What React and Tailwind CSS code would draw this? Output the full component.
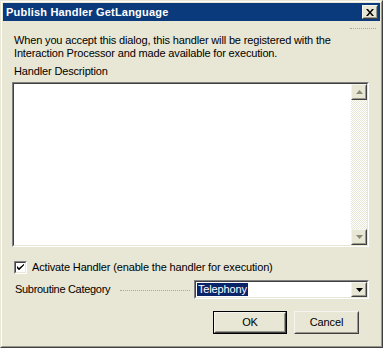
import React from 'react';

const font = { fontFamily: '"Liberation Sans", Arial, sans-serif' };

function Raised({ className = '', children }) {
  return (
    <div className={`border border-t-[#f5f4ee] border-l-[#f5f4ee] border-r-[#404040] border-b-[#404040] bg-[#e8e6d4] ${className}`}>
      <div className="w-full h-full border border-t-[#e8e6d4] border-l-[#e8e6d4] border-r-[#9a988a] border-b-[#9a988a] flex items-center justify-center">
        {children}
      </div>
    </div>
  );
}

function Arrow({ dir = 'down', color = '#000' }) {
  return (
    <svg width="7" height="4" viewBox="0 0 7 4">
      {dir === 'down' ? (
        <path d="M0 0h7L3.5 4z" fill={color} />
      ) : (
        <path d="M0 4h7L3.5 0z" fill={color} />
      )}
    </svg>
  );
}

export default function App() {
  return (
    <div
      className="w-[383px] h-[348px] bg-[#e8e6d4] border border-t-[#e8e6d4] border-l-[#e8e6d4] border-r-[#404040] border-b-[#404040] text-[11px] leading-[13px] tracking-[-0.15px] text-black"
      style={font}
    >
      <div className="w-full h-full border border-t-white border-l-white border-r-[#9a988a] border-b-[#9a988a] p-[1px] flex flex-col">
        {/* title bar */}
        <div className="h-[18px] bg-[#0a3a7c] flex items-center justify-between pl-[3px] pr-[2px]">
          <span className="text-white font-bold text-[11px] tracking-[0.2px]">Publish Handler GetLanguage</span>
          <Raised className="w-[16px] h-[14px]">
            <svg width="8" height="7" viewBox="0 0 8 7">
              <path d="M0 0h2l2 2.5L6 0h2L5 3.5 8 7H6L4 4.5 2 7H0l3-3.5z" fill="#000" />
            </svg>
          </Raised>
        </div>

        <div className="flex items-start justify-end h-[13px] pr-[4px] pt-[7px]">
          <div className="w-[26px] border-t border-dotted border-[#a8a694]" />
        </div>

        {/* body */}
        <div className="flex flex-col pl-[9px] pr-[11px]">
          <p className="ml-[2px]">
            When you accept this dialog, this handler will be registered with the
            <br />
            Interaction Processor and made available for execution.
          </p>
          <p className="ml-[2px] mt-[5px]">Handler Description</p>

          {/* text area */}
          <div className="mt-[4px] h-[165px] border border-t-[#808080] border-l-[#808080] border-r-white border-b-white">
            <div className="w-full h-full border border-t-[#404040] border-l-[#404040] border-r-[#e8e6d4] border-b-[#e8e6d4] flex bg-white">
              <div className="flex-1" />
              <div className="w-[16px] flex flex-col bg-[repeating-conic-gradient(#e8e6d4_0%_25%,#ffffff_0%_50%)] bg-[length:2px_2px]">
                <Raised className="w-[16px] h-[16px]">
                  <Arrow dir="up" color="#8a8878" />
                </Raised>
                <div className="flex-1" />
                <Raised className="w-[16px] h-[16px]">
                  <Arrow dir="down" color="#8a8878" />
                </Raised>
              </div>
            </div>
          </div>

          {/* checkbox */}
          <div className="flex items-center mt-[14px] ml-[2px]">
            <div className="w-[13px] h-[13px] border border-t-[#808080] border-l-[#808080] border-r-white border-b-white">
              <div className="w-full h-full border border-t-[#404040] border-l-[#404040] border-r-[#e8e6d4] border-b-[#e8e6d4] bg-white flex items-center justify-center">
                <svg width="7" height="7" viewBox="0 0 7 7">
                  <path d="M0 2v2l2 2 5-5V0L2 4z" fill="#000" />
                  <path d="M0 3l2 2 5-5v1L2 6 0 4z" fill="#000" />
                </svg>
              </div>
            </div>
            <span className="ml-[5px]">Activate Handler (enable the handler for execution)</span>
          </div>

          {/* subroutine */}
          <div className="flex items-center mt-[6px]">
            <span className="ml-[3px] w-[105px] tracking-[-0.3px]">Subroutine Category</span>
            <div className="w-[70px] border-t border-dotted border-[#a8a694] mt-[2px]" />
            <div className="ml-[4px] flex-1 h-[19px] border border-t-[#808080] border-l-[#808080] border-r-white border-b-white">
              <div className="w-full h-full border border-t-[#404040] border-l-[#404040] border-r-[#e8e6d4] border-b-[#e8e6d4] bg-white flex items-center">
                <span className="ml-[1px] bg-[#0a246a] text-white px-[1px] leading-[13px]">Telephony</span>
                <div className="flex-1" />
                <Raised className="w-[16px] h-[15px]">
                  <Arrow dir="down" />
                </Raised>
              </div>
            </div>
          </div>

          {/* buttons */}
          <div className="flex justify-end mt-[12px] mr-[10px] gap-[7px]">
            <div className="border border-black">
              <Raised className="w-[72px] h-[21px]">OK</Raised>
            </div>
            <Raised className="w-[65px] h-[23px]">Cancel</Raised>
          </div>
        </div>
      </div>
    </div>
  );
}
